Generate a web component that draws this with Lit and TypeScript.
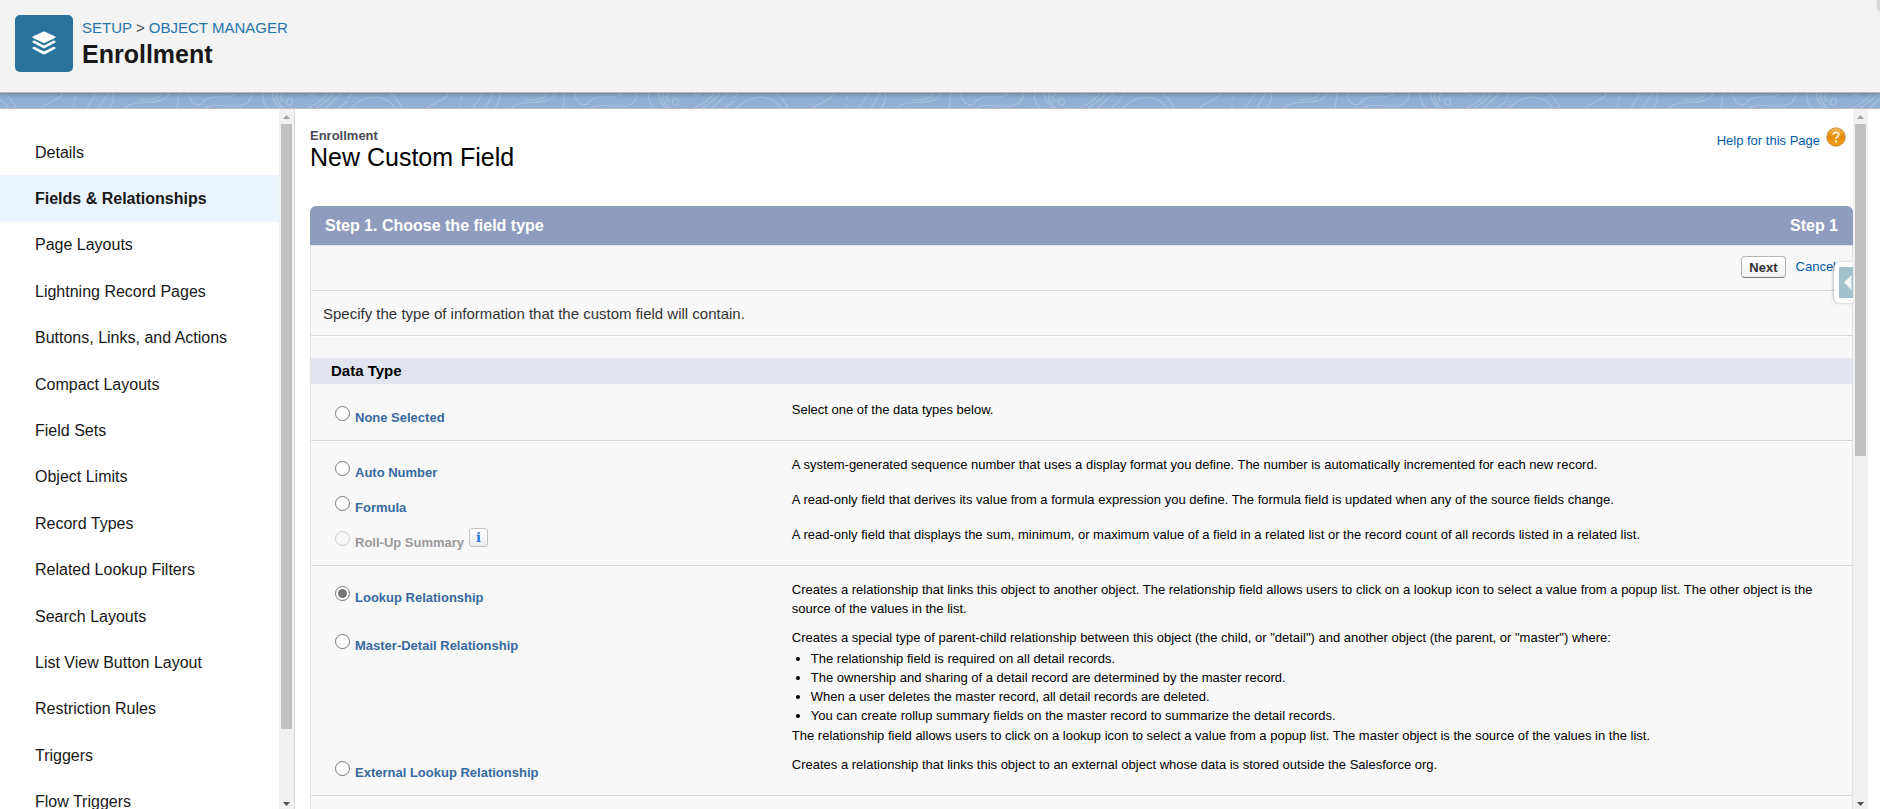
import { LitElement, html, css, nothing } from "lit";
import { customElement, property, query, state } from "lit/decorators.js";
import { styleMap } from "lit/directives/style-map.js";

interface FieldType {
  id: string;
  label: string;
  text?: string;
  points?: string[];
  tail?: string;
  disabled?: boolean;
  info?: boolean;
}

const NAV = [
  "Details", "Fields & Relationships", "Page Layouts", "Lightning Record Pages",
  "Buttons, Links, and Actions", "Compact Layouts", "Field Sets", "Object Limits",
  "Record Types", "Related Lookup Filters", "Search Layouts", "List View Button Layout",
  "Restriction Rules", "Triggers", "Flow Triggers",
];

const GROUPS: FieldType[][] = [
  [{ id: "none", label: "None Selected", text: "Select one of the data types below." }],
  [
    { id: "auto", label: "Auto Number", text: "A system-generated sequence number that uses a display format you define. The number is automatically incremented for each new record." },
    { id: "formula", label: "Formula", text: "A read-only field that derives its value from a formula expression you define. The formula field is updated when any of the source fields change." },
    { id: "rollup", label: "Roll-Up Summary", disabled: true, info: true, text: "A read-only field that displays the sum, minimum, or maximum value of a field in a related list or the record count of all records listed in a related list." },
  ],
  [
    { id: "lookup", label: "Lookup Relationship", text: "Creates a relationship that links this object to another object. The relationship field allows users to click on a lookup icon to select a value from a popup list. The other object is the source of the values in the list." },
    {
      id: "master", label: "Master-Detail Relationship",
      text: 'Creates a special type of parent-child relationship between this object (the child, or "detail") and another object (the parent, or "master") where:',
      points: [
        "The relationship field is required on all detail records.",
        "The ownership and sharing of a detail record are determined by the master record.",
        "When a user deletes the master record, all detail records are deleted.",
        "You can create rollup summary fields on the master record to summarize the detail records.",
      ],
      tail: "The relationship field allows users to click on a lookup icon to select a value from a popup list. The master object is the source of the values in the list.",
    },
    { id: "external", label: "External Lookup Relationship", text: "Creates a relationship that links this object to an external object whose data is stored outside the Salesforce org." },
  ],
];

/* A scrolling area with an always-visible bar whose thumb follows the content. */
@customElement("scroll-pane")
class ScrollPane extends LitElement {
  static styles = css`
    :host { display: flex; min-width: 0; min-height: 0; }
    .view { flex: 1; min-width: 0; overflow-y: auto; scrollbar-width: none; }
    .bar { flex: none; width: 15px; display: flex; flex-direction: column; background: #f1f1f1; }
    .bar svg { flex: none; display: block; width: 15px; height: 15px; fill: #505050; }
    .bar .idle { fill: #a3a3a3; }
    .track { flex: 1; min-height: 0; padding: 0 2px; }
    .thumb { position: relative; background: #c1c1c1; }
  `;
  @property({ type: Number }) ratio = 1;
  @state() private offset = 0;
  @query(".view") private view!: HTMLElement;
  private observer?: ResizeObserver;

  private measure = () => {
    const v = this.view;
    if (!v || !v.scrollHeight) return;
    this.ratio = v.clientHeight / v.scrollHeight;
    this.offset = v.scrollTop / v.scrollHeight;
  };

  firstUpdated() {
    this.observer = new ResizeObserver(this.measure);
    this.observer.observe(this.view);
    for (const el of Array.from(this.children)) this.observer.observe(el);
  }

  disconnectedCallback() {
    super.disconnectedCallback();
    this.observer?.disconnect();
  }

  render() {
    return html`
      <div class="view" @scroll=${this.measure}><slot></slot></div>
      <div class="bar" aria-hidden="true">
        <svg class=${this.offset > 0 ? "" : "idle"} viewBox="0 0 15 15"><path d="M4 10L7.500 6L11 10Z"/></svg>
        <div class="track">
          <div class="thumb" style=${styleMap({ height: `${this.ratio * 100}%`, top: `${this.offset * 100}%` })}></div>
        </div>
        <svg viewBox="0 0 15 15"><path d="M4 8L11 8L7.500 12Z"/></svg>
      </div>
    `;
  }
}

@customElement("setup-header")
class SetupHeader extends LitElement {
  static styles = css`
    :host { display: block; }
    .bar { display: flex; align-items: flex-start; gap: 9px; padding: 15px 15px 20px; background: #f3f3f3; border-bottom: 1px solid #b5b5b5; position: relative; box-shadow: 0 2px 4px rgba(0, 0, 0, 0.25); }
    .badge { width: 58px; height: 57px; border-radius: 5px; background: #2a739e; }
    .badge svg { display: block; width: 58px; height: 57px; }
    .crumbs { font-size: 15px; line-height: 18px; padding-top: 4px; color: #444; }
    .crumbs a { color: #2574a9; text-decoration: none; }
    h1 { margin: 3px 0 0; font-size: 25px; line-height: 28px; color: #181818; }
    .edge { position: absolute; right: -8px; top: -8px; width: 10px; height: 20px; border-radius: 5px; background: #d4d7d6; box-shadow: 0 0 3px rgba(0, 0, 0, 0.3); }
    .clip { position: absolute; inset: 0; overflow: hidden; pointer-events: none; }
    .band { display: block; width: 100%; height: 15px; background: #92b0d6; border-bottom: 1px solid #bdbdbd; }
  `;
  render() {
    return html`
      <header class="bar">
        <div class="badge">
          <svg viewBox="0 0 58 57" aria-hidden="true">
            <g fill="#fff">
              <path d="M28 16.700Q29 16.200 30 16.700L40.300 21.500Q41.200 22.100 40.300 22.700L30 27.800Q29 28.300 28 27.800L17.700 22.700Q16.800 22.100 17.700 21.500Z"/>
              <path d="M17.700 26.100L19.400 25.500L28 29.900Q29 30.400 30 29.900L38.600 25.500L40.300 26.100Q41.200 26.800 40.300 27.500L30 33Q29 33.500 28 33L17.700 27.500Q16.800 26.800 17.700 26.100Z"/>
              <path d="M17.700 32.300L19.400 31.700L28 36.100Q29 36.600 30 36.100L38.600 31.700L40.300 32.300Q41.200 33 40.300 33.700L30 39.200Q29 39.700 28 39.200L17.700 33.700Q16.800 33 17.700 32.300Z"/>
            </g>
          </svg>
        </div>
        <div>
          <nav class="crumbs" aria-label="Breadcrumb"><a href="#setup">SETUP</a> &gt; <a href="#objects">OBJECT MANAGER</a></nav>
          <h1>Enrollment</h1>
        </div>
        <div class="clip"><div class="edge"></div></div>
      </header>
      <svg class="band" aria-hidden="true">
        <defs>
          <pattern id="topo" x="62" y="0" width="386" height="15" patternUnits="userSpaceOnUse">
            <g fill="none" stroke="#a6c0df" stroke-width="1.200">
              <path d="M0 0C0 6 -12 8 -21 15M386 0C386 6 374 8 365 15"/>
              <path d="M12 15V12M12 7L14 3"/>
              <path d="M25 15L35 0M37 15L46 0M47 15Q53 8 51 0"/>
              <path d="M63 15C74 4 98 16 108 0M78 7C90 7 97 6 99 0"/>
              <path d="M115 15L117 0"/>
              <path d="M127 0C127 8 134 14 139 11C146 3 150 4 160 4Q172 4 174 0"/>
              <path d="M143 15C150 10 162 14 178 13Q190 10 189 0"/>
              <path d="M201 0Q199 8 206 15M211 0Q210 9 219 15M215 0Q213 9 222 15"/>
              <path d="M222 0L218 4L221 9"/><ellipse cx="227.500" cy="9" rx="3" ry="3.500"/><path d="M246 0Q249 6 253 0"/>
              <path d="M246 15Q260 9 266 0M254 15Q266 8 272 0M264 15L280 0"/>
              <path d="M277 15L286 8M286 5L290 1"/>
              <path d="M289 15C305 -1 324 2 333 15M328 0Q336 6 340 15"/>
            </g>
          </pattern>
        </defs>
        <rect width="100%" height="15" fill="url(#topo)"/>
      </svg>
    `;
  }
}

@customElement("setup-nav")
class SetupNav extends LitElement {
  static styles = css`
    :host { display: block; }
    ul { list-style: none; margin: 0; padding: 20px 0 59px; display: grid; grid-auto-rows: 1fr; min-height: 696px; }
    li { display: grid; }
    a { display: flex; align-items: center; padding: 1px 35px 0; font-size: 16px; color: #181818; text-decoration: none; }
    .on { background: #ebf4fe; font-weight: 700; }
  `;
  @state() private current = "Fields & Relationships";
  render() {
    return html`<ul>${NAV.map((n) => html`<li><a href="#nav" class=${n === this.current ? "on" : ""} @click=${() => (this.current = n)}>${n}</a></li>`)}</ul>`;
  }
}

@customElement("field-wizard")
class FieldWizard extends LitElement {
  static styles = css`
    :host { display: block; padding-left: 15px; }
    a { color: #015ba7; text-decoration: none; }
    .head { display: flex; justify-content: space-between; align-items: flex-start; padding: 18px 7px 36px 0; }
    .object { font-size: 13px; line-height: 18px; font-weight: 700; color: #4a4a56; margin: 0; }
    h2 { margin: 0; font-size: 25px; line-height: 25px; font-weight: 400; color: #000; }
    .help { display: flex; align-items: flex-end; gap: 6px; font-size: 13px; line-height: 18px; }
    .help svg { width: 20px; height: 20px; margin-bottom: 3px; }
    .title { display: flex; justify-content: space-between; padding: 0 15px; background: #8e9dbe; color: #fff; border-radius: 6px 6px 0 0; font-size: 16px; line-height: 39px; font-weight: 700; }
    .title h3 { margin: 0; font-size: 16px; }
    .body { border: 1px solid #e4e4e4; background: #f8f8f8; min-height: 1274px; }
    .line { border-bottom: 1px solid #d6d6d6; box-shadow: 0 1px 0 #fff; margin-bottom: 1px; }
    .actions { display: flex; justify-content: flex-end; align-items: center; gap: 10px; padding: 10px 16px 12px; font-size: 13px; line-height: 22px; }
    button { font: 700 13px "Liberation Sans", Arial, sans-serif; color: #333; }
    .next { height: 22px; padding: 0 7px; border: 1px solid #b5b5b5; border-bottom-color: #7f7f7f; border-radius: 4px; background: linear-gradient(#fff, #f0f0f0); }
    .intro { margin: 0; padding: 0 12px; font-size: 15px; line-height: 43px; color: #333; }
    .section { margin: 22px 0 3px; padding: 0 20px; background: #e2e5ef; font-size: 15px; line-height: 26px; color: #000; }
    .group { padding: 8px 16px 10px 24px; }
    .row { display: grid; grid-template-columns: 7fr 16fr; padding: 5px 0; font-size: 13px; line-height: 19px; color: #000; }
    .pick { display: flex; align-items: flex-start; gap: 5px; font-weight: 700; }
    .pick input { width: 15px; height: 15px; margin: 6px 0 0; accent-color: #767676; }
    .pick label { color: #36699f; padding-top: 10px; line-height: 15px; }
    .off label { color: #999; }
    .pick .info { width: 19px; height: 19px; margin-top: 3px; padding: 0; border: 1px solid #c4c4c4; border-radius: 3px; background: linear-gradient(#fff, #eaeef2); color: #1f78e0; font: 700 13px/15px "DejaVu Serif", serif; }
    p { margin: 0; }
    ul { margin: 2px 0 1px; padding-left: 19px; }
  `;
  @state() private picked = "lookup";
  private row(f: FieldType) {
    return html`<div class="row">
      <div class="pick ${f.disabled ? "off" : ""}">
        <input type="radio" name="dt" id=${f.id} .checked=${f.id === this.picked} ?disabled=${f.disabled} @change=${() => (this.picked = f.id)} />
        <label for=${f.id}>${f.label}</label>
        ${f.info ? html`<button class="info" aria-label="Info">i</button>` : nothing}
      </div>
      <div><p>${f.text}</p>
        ${f.points ? html`<ul>${f.points.map((p) => html`<li>${p}</li>`)}</ul>` : nothing}
        ${f.tail ? html`<p>${f.tail}</p>` : nothing}
      </div>
    </div>`;
  }
  render() {
    return html`
      <div class="head">
        <div><p class="object">Enrollment</p><h2>New Custom Field</h2></div>
        <a class="help" href="#help">Help for this Page
          <svg viewBox="0 0 20 20" aria-hidden="true">
            <defs><linearGradient id="o" x1="0" y1="0" x2="0" y2="1"><stop offset="0" stop-color="#eeb95c"/><stop offset=".5" stop-color="#e88c00"/><stop offset="1" stop-color="#f2a11c"/></linearGradient></defs>
            <circle cx="10" cy="10" r="9.200" fill="url(#o)" stroke="#b98233" stroke-width=".8"/>
            <path d="M7.300 7.800Q7.300 5.400 10 5.400Q12.700 5.400 12.700 7.500Q12.700 8.800 11.400 9.700Q10 10.600 10 12" fill="none" stroke="#fff3d8" stroke-width="1.800"/><circle cx="10" cy="14.500" r="1.200" fill="#fff3d8"/>
          </svg></a>
      </div>
      <div class="title"><h3>Step 1. Choose the field type</h3><span>Step 1</span></div>
      <div class="body">
        <div class="actions line"><button class="next">Next</button><a href="#cancel">Cancel</a></div>
        <p class="intro line">Specify the type of information that the custom field will contain.</p>
        <h3 class="section">Data Type</h3>
        ${GROUPS.map((g) => html`<div class="group line">${g.map((f) => this.row(f))}</div>`)}
      </div>
    `;
  }
}

@customElement("app-root")
class AppRoot extends LitElement {
  static styles = css`
    :host { display: flex; flex-direction: column; height: 100vh; font-family: "Liberation Sans", Arial, sans-serif; background: #fff; }
    setup-header { flex: none; position: relative; }
    .main { flex: 1; min-height: 0; display: flex; }
    .side { flex: none; width: 294px; display: flex; border-right: 1px solid #dddbda; }
    .content { flex: 1; min-width: 0; position: relative; margin-right: 12px; display: flex; }
    scroll-pane { flex: 1; }
    .tab { position: absolute; right: 15px; top: 153px; width: 19px; height: 41px; padding: 5px 0 5px 5px; box-sizing: border-box; border: 0; border-radius: 6px 0 0 6px; background: rgba(255, 255, 255, 0.8); box-shadow: -1px 0 3px rgba(0, 0, 0, 0.25); }
    .tab svg { display: block; width: 14px; height: 31px; background: #a3c1cd; border-radius: 1px 0 0 1px; }
  `;
  render() {
    return html`
      <setup-header></setup-header>
      <div class="main">
        <aside class="side"><scroll-pane><setup-nav></setup-nav></scroll-pane></aside>
        <main class="content">
          <scroll-pane><field-wizard></field-wizard></scroll-pane>
          <button class="tab" aria-label="Open sidebar"><svg viewBox="0 0 14 31"><path d="M5 15.500L12.500 8V23Z" fill="#f3f3f3"/></svg></button>
        </main>
      </div>
    `;
  }
}
